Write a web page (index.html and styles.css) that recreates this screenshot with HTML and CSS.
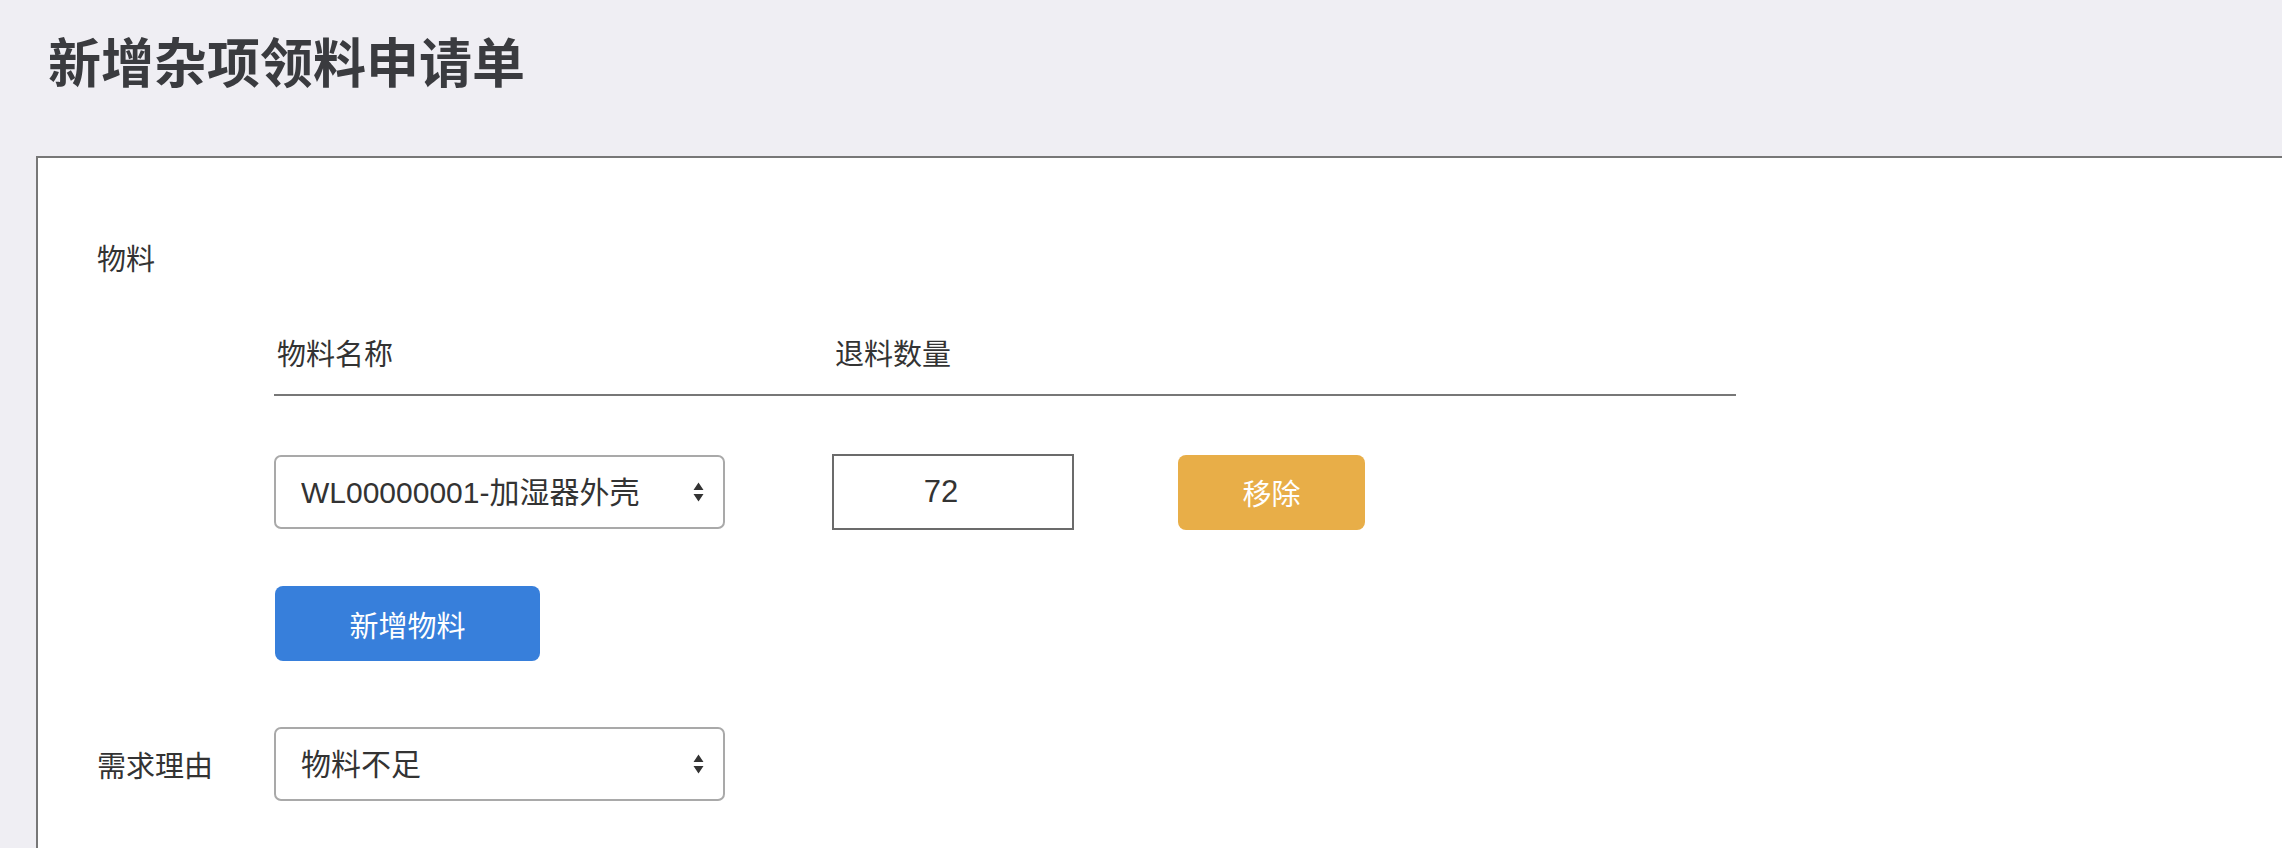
FILE: index.html
```html
<!DOCTYPE html>
<html lang="zh-CN">
<head>
  <meta charset="UTF-8">
  <title>新增杂项领料申请单</title>
  <link rel="stylesheet" href="styles.css">
</head>
<body>

  <h1 class="page-title">新增杂项领料申请单</h1>

  <div class="panel">
    <div class="section-label">物料</div>

    <!-- material table -->
    <div class="mat-table">
      <div class="mat-head">
        <div class="cell">物料名称</div>
        <div class="cell">退料数量</div>
        <div class="cell"></div>
      </div>
      <div class="mat-row">
        <div class="cell">
          <div class="select-wrap wide">
            <select class="select">
              <option selected>WL00000001-加湿器外壳</option>
            </select>
            <svg class="caret" width="11" height="20" viewBox="0 0 11 20">
              <path d="M5.5 0.5 L10.5 8 H0.5 Z M5.5 19.5 L10.5 12 H0.5 Z" fill="#333"/>
            </svg>
          </div>
        </div>
        <div class="cell">
          <input class="qty" value="72">
        </div>
        <div class="cell">
          <button class="btn btn-warn">移除</button>
        </div>
      </div>
      <button class="btn btn-primary">新增物料</button>
    </div>

    <div class="form-row">
      <label class="form-label">需求理由</label>
      <div class="select-wrap wide">
        <select class="select">
          <option selected>物料不足</option>
        </select>
        <svg class="caret" width="11" height="20" viewBox="0 0 11 20">
          <path d="M5.5 0.5 L10.5 8 H0.5 Z M5.5 19.5 L10.5 12 H0.5 Z" fill="#333"/>
        </svg>
      </div>
    </div>
  </div>

</body>
</html>
```

FILE: styles.css
```css
body {
  margin:0; background:#efeef3; color:#333;
  font-family:"Liberation Sans","Noto Sans CJK SC",sans-serif;
  font-size:29px; overflow:hidden;
}

.page-title {
  margin:34px 0 60px 48px; font-size:53px; line-height:62px;
  font-weight:bold; color:#3a3b3f;
}

.panel {
  margin-left:36px; background:#fff;
  border-top:2px solid #777; border-left:2px solid #777;
  padding:82px 0 60px 59px;
}
.section-label { line-height:40px; }

/* material table */
.mat-table { margin:55px 0 0 177px; width:1462px; }
.mat-head, .mat-row {
  display:grid; grid-template-columns:558px 345px 1fr;
}
.mat-head { border-bottom:2px solid #777; padding-bottom:19px; }
.mat-head .cell { line-height:40px; padding-left:3px; }
.mat-row { margin-top:58px; align-items:center; }

.select-wrap { position:relative; display:inline-block; }
.select-wrap.wide { width:451px; }
.select {
  appearance:none; -webkit-appearance:none;
  width:100%; height:74px; box-sizing:border-box;
  border:2px solid #a9a9a9; border-radius:7px; background:#fff;
  padding:0 40px 0 25px; color:#333;
  font-family:inherit; font-size:30px;
}
.caret { position:absolute; right:21px; top:27px; pointer-events:none; }

.qty {
  width:242px; height:76px; box-sizing:border-box;
  border:2px solid #6b6b6b; border-radius:0;
  padding:0 24px 0 0;
  text-align:center; color:#333;
  font-family:inherit; font-size:31px;
}

.btn {
  border:none; border-radius:8px; color:#fff; height:75px;
  font-family:inherit; font-size:29px; cursor:pointer;
}
.btn-warn { background:#e8ae48; width:187px; margin-left:1px; }
.btn-primary { background:#377fdb; width:265px; margin-top:56px; margin-left:1px; }

.form-row { display:flex; align-items:center; margin-top:66px; }
.form-label { width:177px; }
```
